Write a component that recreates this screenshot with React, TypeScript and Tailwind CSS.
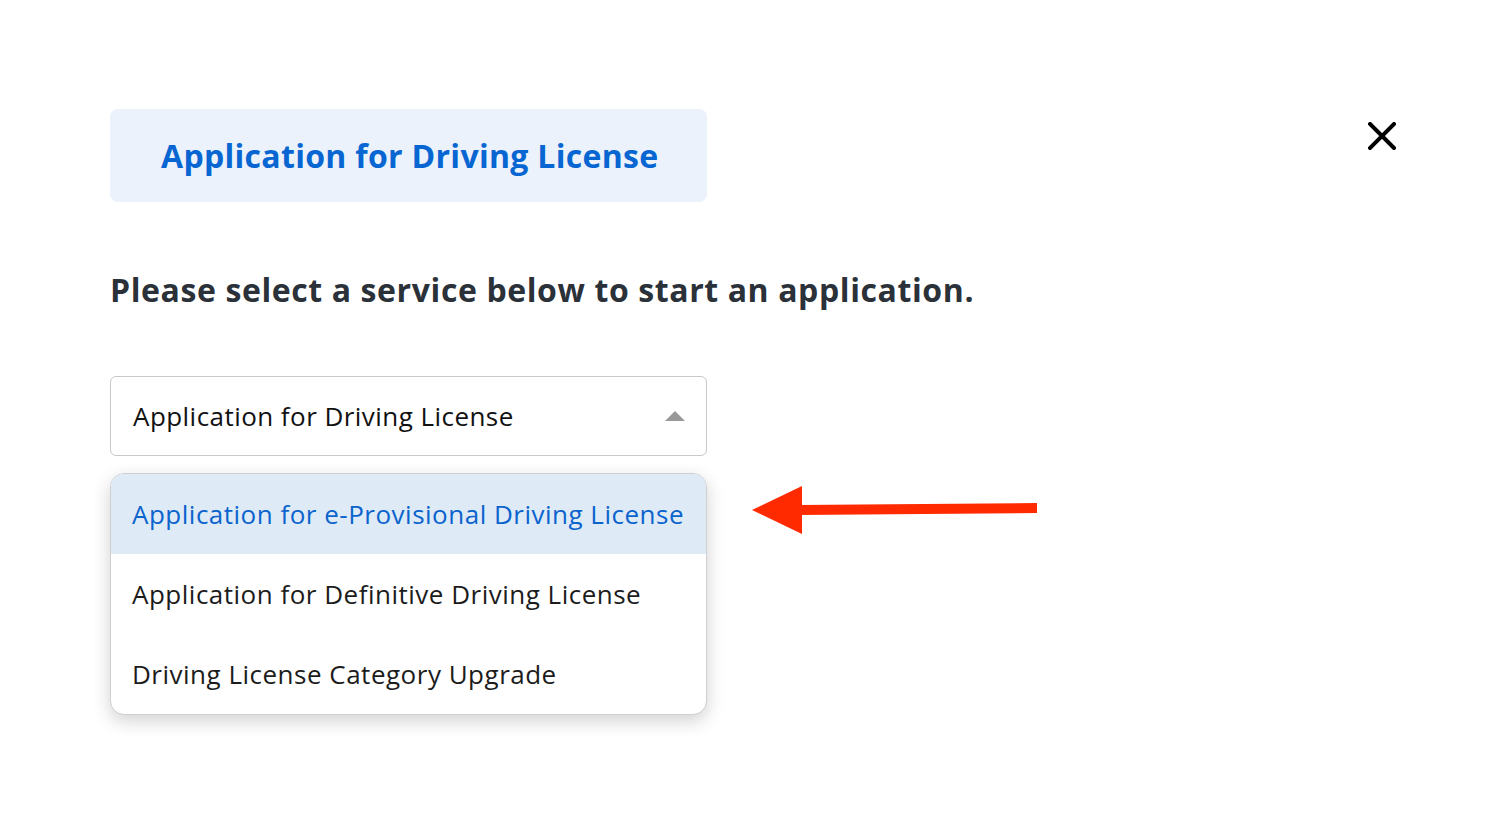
import { useState } from "react";

const options = [
    "Application for e-Provisional Driving License",
    "Application for Definitive Driving License",
    "Driving License Category Upgrade",
];

function App() {
    const [selected, setSelected] = useState(0);

    return (
        <div className="relative min-h-[828px] w-full bg-white font-['Open_Sans',sans-serif]">
            <div className="flex items-start justify-between pl-[110px] pr-[92px] pt-[109px]">
                <div className="flex h-[93px] w-[597px] items-center rounded-lg bg-[#ebf2fc] pl-[51px]">
                    <h1 className="text-[32px] font-bold tracking-[0.3px] text-[#0766d1]">Application for Driving License</h1>
                </div>
                <button className="mt-[13px] text-black">
                    <svg width="28" height="28" viewBox="0 0 28 28" fill="none" stroke="currentColor" strokeWidth="4" strokeLinecap="square">
                        <path d="M2 2 L26 26 M26 2 L2 26" />
                    </svg>
                </button>
            </div>

            <div className="px-[110px]">
                <h2 className="mt-[68px] text-[32px] font-bold leading-[40px] tracking-[0.6px] text-[#2b3139]">
                    Please select a service below to start an application.
                </h2>

                <div className="mt-[66px] w-[597px]">
                    <div className="flex h-[80px] items-center justify-between rounded-md border border-[#c9c9c9] pl-[22px] pr-[21px]">
                        <span className="text-[26px] tracking-[0.45px] text-[#111]">Application for Driving License</span>
                        <svg width="20" height="10" viewBox="0 0 20 10">
                            <path d="M0 10 L10 0 L20 10 Z" fill="#999" />
                        </svg>
                    </div>

                    <ul className="mt-[17px] overflow-hidden rounded-[14px] border border-[#cfcfcf] bg-white shadow-[0_6px_18px_rgba(0,0,0,0.18)]">
                        {options.map((opt, i) => (
                            <li
                                key={opt}
                                onClick={() => setSelected(i)}
                                className={
                                    i === selected
                                        ? "flex h-[80px] items-center bg-[#deebf7] pl-[21px] text-[26px] tracking-[0.5px] text-[#0b63cd]"
                                        : "flex h-[80px] items-center pl-[21px] text-[26px] tracking-[0.5px] text-[#1c1c1c]"
                                }
                            >
                                {opt}
                            </li>
                        ))}
                    </ul>
                </div>
            </div>

            <svg className="absolute left-[750px] top-[484px]" width="290" height="54" viewBox="0 0 290 54">
                <path d="M2 26 L52 2 L52 50 Z" fill="#ff2a00" />
                <path d="M48 21 L287 19 L287 29 L48 31 Z" fill="#ff2a00" />
            </svg>
        </div>
    );
}

export default App;
